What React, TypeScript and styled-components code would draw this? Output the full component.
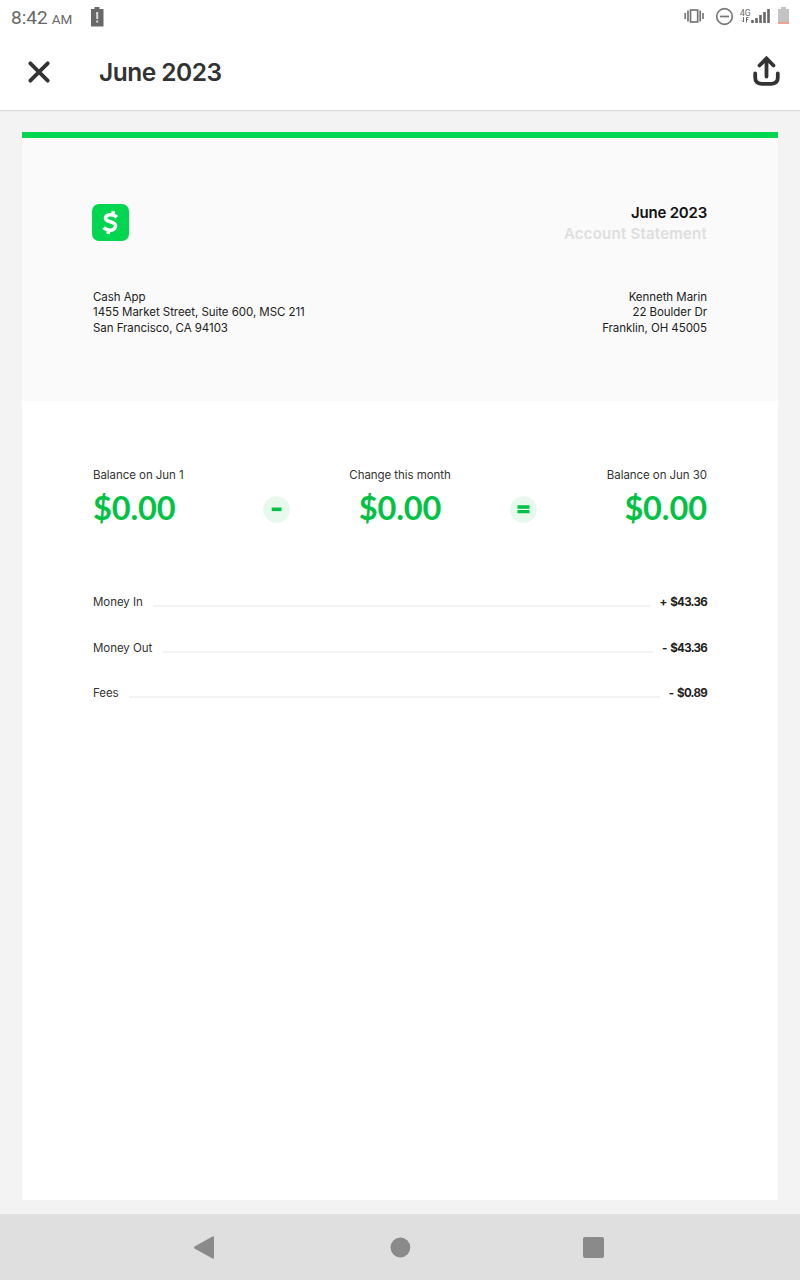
import React from 'react';
import styled, { createGlobalStyle } from 'styled-components';

const GlobalStyle = createGlobalStyle`
  * { box-sizing: border-box; }
  body { margin: 0; background: #f3f3f3; font-family: Inter, "Open Sans", sans-serif; }
`;

const Screen = styled.div`
  width: 800px;
  height: 1280px;
  display: flex;
  flex-direction: column;
  overflow: hidden;
  background: #f3f3f3;
`;

const StatusBar = styled.div`
  height: 34px;
  flex: none;
  display: flex;
  justify-content: space-between;
  background: #fff;
  padding: 0 10px 0 11px;
  color: #686868;
`;

const StatusLeft = styled.div`
  display: flex;
  font: 400 19px/35px Roboto, sans-serif;
`;

const Meridiem = styled.span`
  font-size: 13.5px;
  line-height: 39px;
  margin-left: 4px;
`;

const BatteryAlert = styled.svg`
  margin: 7px 0 0 18px;
`;

const StatusIcons = styled.svg`
  display: block;
`;

const Header = styled.header`
  height: 77px;
  flex: none;
  display: flex;
  align-items: center;
  background: #fff;
  border-bottom: 1px solid #dcdcdc;
  box-shadow: 0 1px 1px #ededed;
  padding: 0 19px 0 27px;
`;

const Title = styled.h1`
  flex: 1;
  margin: 0 0 0 48px;
  font-size: 24.5px;
  font-weight: 600;
  line-height: 32px;
  letter-spacing: -0.5px;
  color: #333;
`;

const Paper = styled.main`
  margin: 21px 22px 14px;
  flex: 1;
  background: #fff;
  border-top: 6px solid #00d64f;
`;

const Letterhead = styled.section`
  height: 263px;
  background: #fafafa;
  padding: 66px 71px 0 70px;
`;

const Split = styled.div`
  display: flex;
  justify-content: space-between;
`;

const StatementTitle = styled.div`
  text-align: right;
  height: 37px;
  font-size: 15px;
  font-weight: 600;
  line-height: 20.5px;
  letter-spacing: -0.2px;
  margin-top: -1px;
  color: #111;
`;

const Muted = styled.div`
  color: #dedede;
  letter-spacing: 0.22px;
`;

const Address = styled.address<{ $end?: boolean }>`
  margin: 49px 0 0 1px;
  font-style: normal;
  font-size: 11.5px;
  line-height: 15.3px;
  letter-spacing: -0.05px;
  color: #222;
  text-align: ${(p) => (p.$end ? 'right' : 'left')};
`;

const Summary = styled.section`
  padding: 66px 71px 0;
`;

const Balances = styled.div`
  display: flex;
  justify-content: space-between;
`;

const Balance = styled.div<{ $align: string }>`
  text-align: ${(p) => p.$align};
  width: 121px;
`;

const Caption = styled.div`
  font-size: 11.5px;
  line-height: 17px;
  letter-spacing: -0.06px;
  color: #333;
  white-space: nowrap;
`;

const Amount = styled.div`
  font-family: Lato, sans-serif;
  font-size: 32.5px;
  font-weight: 700;
  line-height: 40px;
  margin-top: 4px;
  letter-spacing: -0.1px;
  color: #00c244;
`;

const Operator = styled.svg`
  margin-top: 29px;
`;

const Rows = styled.div`
  padding-top: 65px;
`;

const Row = styled.div`
  height: 45.7px;
  display: flex;
  align-items: flex-start;
  font-size: 11.5px;
  letter-spacing: -0.05px;
  line-height: 18px;
  color: #333;
`;

const Leader = styled.span`
  flex: 1;
  height: 2px;
  margin: 12px 9px 0 10px;
  background: #f3f3f3;
`;

const Value = styled.b`
  color: #222;
  letter-spacing: -0.7px;
  word-spacing: 1.6px;
`;

const NavBar = styled.nav`
  height: 66px;
  flex: none;
  background: #dfdfdf;
`;

const entries = [
  { label: 'Money In', value: '+ $43.36' },
  { label: 'Money Out', value: '- $43.36' },
  { label: 'Fees', value: '- $0.89' },
];

export default function App() {
  return (
    <Screen>
      <GlobalStyle />
      <StatusBar>
        <StatusLeft>
          8:42<Meridiem>AM</Meridiem>
          <BatteryAlert width="14" height="20" viewBox="0 0 14 20">
            <path d="M4.500 0h5v2h4v17.500H1V2h3.500z" fill="#686868" />
            <path d="M7.200 5v7M7.200 13.500v2" stroke="#ddd" strokeWidth="2" />
          </BatteryAlert>
        </StatusLeft>
        <StatusIcons width="107" height="34" viewBox="683 0 107 34">
          <g fill="none" stroke="#777" strokeWidth="1.700">
            <rect x="690.500" y="10" width="7.200" height="12" />
            <path d="M688 10.500v11M700.200 10.500v11M685.200 13v6M703 13v6" />
            <circle cx="724.500" cy="16.500" r="7.800" />
            <path d="M720 16.500h9" />
          </g>
          <text x="740" y="16" fontFamily="Roboto, sans-serif" fontSize="8.500" fill="#686868">4G</text>
          <path d="M743.500 17v5M742 20.500l1.500 1.500M746.500 22.500v-5l2 0M746 19.500h2" fill="none" stroke="#686868" />
          <path d="M752.500 23v-3M756.500 23v-5M760.500 23v-8M764.500 23v-11M768.500 23v-14" stroke="#686868" strokeWidth="2.600" />
          <path d="M781 7h5v2h3v13.500h-11V9h3z" fill="#c3c3c3" />
          <path d="M778 23h11" stroke="#f08f78" strokeWidth="1.600" />
        </StatusIcons>
      </StatusBar>
      <Header>
        <svg width="24" height="24" viewBox="0 0 24 24">
          <path d="M3.300 3.300l17.400 17.400M20.700 3.300L3.300 20.700" stroke="#333" strokeWidth="3.800" strokeLinecap="round" />
        </svg>
        <Title>June 2023</Title>
        <svg width="28" height="34" viewBox="0 0 28 34">
          <path d="M13.500 21.500V4M6.500 10.500l7-7L20.500 10.500M2.200 18.500v4q0 6.300 6.300 6.300h10q6.300 0 6.300-6.300v-4" fill="none" stroke="#333" strokeWidth="3.800" strokeLinecap="round" />
        </svg>
      </Header>
      <Paper>
        <Letterhead>
          <Split>
            <svg width="37" height="37" viewBox="0 0 37 37">
              <rect width="37" height="37" rx="7" fill="#00d64f" />
              <path d="M24.800 13.200C21.500 9.700 13.800 9.700 13.500 14.200C13.300 18.800 23.800 16.700 23.500 22C23.200 27 16 27.600 11.500 23.700M20.600 11l.8-3.800M16 30l.8-3.800" fill="none" stroke="#fff" strokeWidth="3.600" />
            </svg>
            <StatementTitle>
              June 2023
              <Muted>Account Statement</Muted>
            </StatementTitle>
          </Split>
          <Split>
            <Address>
              Cash App<br />1455 Market Street, Suite 600, MSC 211<br />San Francisco, CA 94103
            </Address>
            <Address $end>
              Kenneth Marin<br />22 Boulder Dr<br />Franklin, OH 45005
            </Address>
          </Split>
        </Letterhead>
        <Summary>
          <Balances>
            <Balance $align="left"><Caption>Balance on Jun 1</Caption><Amount>$0.00</Amount></Balance>
            <Operator width="27" height="27" viewBox="0 0 27 27">
              <circle cx="13.500" cy="13.500" r="13.300" fill="#e6f9ec" />
              <path d="M8.700 13.300h9.800" stroke="#00c244" strokeWidth="3.600" />
            </Operator>
            <Balance $align="center"><Caption>Change this month</Caption><Amount>$0.00</Amount></Balance>
            <Operator width="27" height="27" viewBox="0 0 27 27">
              <circle cx="13.500" cy="13.500" r="13.300" fill="#e6f9ec" />
              <path d="M7.500 11h12M7.500 15.700h12" stroke="#00c244" strokeWidth="3.300" />
            </Operator>
            <Balance $align="right"><Caption>Balance on Jun 30</Caption><Amount>$0.00</Amount></Balance>
          </Balances>
          <Rows>
            {entries.map((e) => (
              <Row key={e.label}>{e.label}<Leader /><Value>{e.value}</Value></Row>
            ))}
          </Rows>
        </Summary>
      </Paper>
      <NavBar>
        <svg width="800" height="66" viewBox="0 1214 800 66" fill="#8a8a8a">
          <path d="M194.500 1246.500L212.500 1236.400Q214 1236 214 1237.500V1257.500Q214 1259 212.500 1258.600L194.500 1248.500Q193.500 1247.500 194.500 1246.500z" />
          <circle cx="400.400" cy="1247.500" r="9.900" />
          <rect x="583" y="1237" width="21" height="21" rx="2" />
        </svg>
      </NavBar>
    </Screen>
  );
}
